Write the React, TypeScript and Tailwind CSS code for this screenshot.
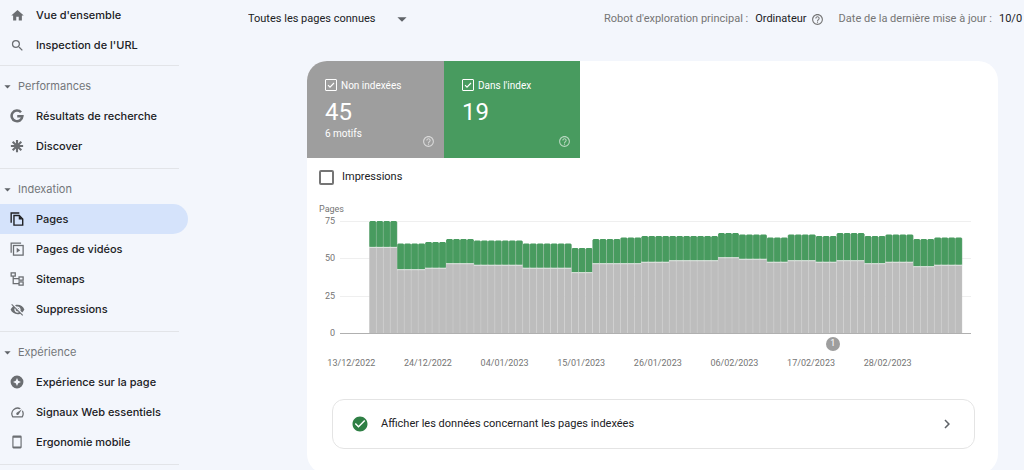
import { useState } from "react";
import type { ReactNode } from "react";
import {
  MdArrowDropDown,
  MdCheckCircle,
  MdChevronRight,
  MdHelpOutline,
  MdHome,
  MdOutlineSpeed,
  MdSearch,
  MdVisibilityOff,
} from "react-icons/md";

function GoogleIcon() {
  return (
    <svg viewBox="0 0 24 24" className="size-[14px]" fill="none" stroke="currentColor" strokeWidth="4.4">
      <path d="M18.9 5.6A9.2 9.2 0 1 0 21.2 12.4H12.4" />
    </svg>
  );
}

function DiscoverIcon() {
  return (
    <svg viewBox="0 0 24 24" className="size-[14px]" fill="none" stroke="currentColor" strokeWidth="3.6">
      <path d="M12 1.5v21M1.5 12h21M4.6 4.6l14.8 14.8M19.4 4.6L4.6 19.4" />
    </svg>
  );
}

function PagesIcon() {
  return (
    <svg viewBox="0 0 24 24" className="size-[14px]" fill="none" stroke="currentColor" strokeWidth="2.4">
      <path d="M2 18.500V1.800h14" />
      <path d="M6.800 6h9l6 6v10.500h-15z" />
      <path d="M15 6v7h7z" fill="currentColor" stroke="none" />
    </svg>
  );
}

function VideoPagesIcon() {
  return (
    <svg viewBox="0 0 24 24" className="size-[14px]" fill="none" stroke="currentColor" strokeWidth="2.2">
      <path d="M2 18.5V2h17" />
      <rect x="6" y="6" width="16.5" height="16.5" />
      <path d="M11.5 10v8.5l6-4.25z" fill="currentColor" stroke="none" />
    </svg>
  );
}

function SitemapIcon() {
  return (
    <svg viewBox="0 0 24 24" className="size-[14px]" fill="none" stroke="currentColor" strokeWidth="2.2">
      <rect x="2" y="1.5" width="7" height="5.5" />
      <rect x="15.5" y="8.5" width="7" height="5.5" />
      <rect x="15.5" y="17" width="7" height="5.5" />
      <path d="M5.5 7v12.8h10M5.5 11.3h10" />
    </svg>
  );
}

function ExperienceIcon() {
  return (
    <svg viewBox="0 0 24 24" className="size-[14px]" fill="currentColor">
      <path
        fillRule="evenodd"
        d="M12 1a11 11 0 1 0 0 22 11 11 0 0 0 0-22zm0 4.2l2.1 4.7 4.7 2.1-4.7 2.1-2.1 4.7-2.1-4.7L5.2 12l4.7-2.1z"
      />
    </svg>
  );
}

function PhoneIcon() {
  return (
    <svg viewBox="0 0 24 24" className="size-[14px]" fill="currentColor">
      <path
        fillRule="evenodd"
        d="M6 1h12a2 2 0 0 1 2 2v18a2 2 0 0 1-2 2H6a2 2 0 0 1-2-2V3a2 2 0 0 1 2-2zm0 3.5v15h12v-15z"
      />
    </svg>
  );
}

type Item = { label: string; icon: ReactNode; active?: boolean };
type Section = { title?: string; items: Item[] };

const sections: Section[] = [
  {
    items: [
      { label: "Vue d'ensemble", icon: <MdHome className="size-[15px]" /> },
      { label: "Inspection de l'URL", icon: <MdSearch className="size-[15px]" /> },
    ],
  },
  {
    title: "Performances",
    items: [
      { label: "Résultats de recherche", icon: <GoogleIcon /> },
      { label: "Discover", icon: <DiscoverIcon /> },
    ],
  },
  {
    title: "Indexation",
    items: [
      { label: "Pages", icon: <PagesIcon />, active: true },
      { label: "Pages de vidéos", icon: <VideoPagesIcon /> },
      { label: "Sitemaps", icon: <SitemapIcon /> },
      { label: "Suppressions", icon: <MdVisibilityOff className="size-[15px]" /> },
    ],
  },
  {
    title: "Expérience",
    items: [
      { label: "Expérience sur la page", icon: <ExperienceIcon /> },
      { label: "Signaux Web essentiels", icon: <MdOutlineSpeed className="size-[15px]" /> },
      { label: "Ergonomie mobile", icon: <PhoneIcon /> },
    ],
  },
];

function NavItem({ label, icon, active }: Item) {
  return (
    <a
      href="#"
      aria-current={active ? "page" : undefined}
      className={
        active
          ? "flex h-[30px] items-center rounded-r-full bg-[#d5e3fb] pl-[9px] text-[#202124]"
          : "flex h-[30px] items-center pl-[9px] text-[#202124]"
      }
    >
      <span className={active ? "flex w-4 justify-center" : "flex w-4 justify-center text-[#6b6e72]"}>{icon}</span>
      <span className="pl-[11px] whitespace-nowrap">{label}</span>
    </a>
  );
}

function Sidebar() {
  return (
    <nav className="w-[188px] shrink-0 font-['Inter','Roboto',sans-serif] text-[11px] font-medium">
      {sections.map((section, i) => (
        <div key={i}>
          <div className={section.title ? "pt-[5px] pb-[7px]" : "pb-[5px]"}>
            {section.title && (
              <button type="button" className="flex h-[30px] items-center font-normal text-[#73767a]">
                <MdArrowDropDown className="size-[15px] text-[#5f6368]" />
                <span className="pl-[3px]">{section.title}</span>
              </button>
            )}
            {section.items.map((item) => (
              <NavItem key={item.label} {...item} />
            ))}
          </div>
          <hr className="mr-[9px] border-[#e2e4e8]" />
        </div>
      ))}
    </nav>
  );
}

function MetricCard(props: { label: string; value: number; note?: string; tone: "gray" | "green" }) {
  const [checked, setChecked] = useState(true);
  return (
    <div
      className={
        props.tone === "gray"
          ? "flex h-[97px] w-[137px] flex-col bg-[#9e9e9e] pt-[17px] pr-[9px] pl-[18px] text-white"
          : "flex h-[97px] w-[136px] flex-col bg-[#489b5f] pt-[17px] pr-[9px] pl-[18px] text-white"
      }
    >
      <label className="flex h-[14px] items-center gap-1 text-[10px] whitespace-nowrap">
        <span className="grid size-3 shrink-0">
          <input
            type="checkbox"
            checked={checked}
            onChange={() => setChecked(!checked)}
            className="col-start-1 row-start-1 size-3 appearance-none rounded-[1px] border border-white"
          />
          {checked && (
            <svg
              viewBox="0 0 12 12"
              className="pointer-events-none col-start-1 row-start-1 size-3"
              fill="none"
              stroke="white"
              strokeWidth="1.1"
            >
              <path d="M3 6.2l2 2 4-4.2" />
            </svg>
          )}
        </span>
        {props.label}
      </label>
      <div className="pt-[6px] text-[24px] leading-[28px]">{props.value}</div>
      <div className="flex items-start justify-between">
        <span className="pt-px text-[10px] leading-[14px]">{props.note}</span>
        <button type="button" aria-label="Aide" className="pt-[9px] opacity-60">
          <MdHelpOutline className="size-[13px]" />
        </button>
      </div>
    </div>
  );
}

// Runs of consecutive days: [days, total pages, pages not indexed]
const runs: [number, number, number][] = [
  [4, 75, 57],
  [4, 60, 42],
  [3, 61, 43],
  [4, 63, 46],
  [7, 62, 45],
  [7, 60, 43],
  [3, 57, 40],
  [4, 63, 46],
  [3, 64, 46],
  [4, 65, 47],
  [7, 65, 48],
  [3, 67, 50],
  [4, 66, 49],
  [3, 64, 47],
  [4, 66, 48],
  [3, 65, 47],
  [4, 67, 48],
  [3, 65, 46],
  [4, 66, 47],
  [3, 63, 44],
  [4, 64, 45],
];
const days = runs.flatMap(([n, total, off]) => Array.from({ length: n }, () => ({ total, off })));
const dates = [
  "13/12/2022",
  "24/12/2022",
  "04/01/2023",
  "15/01/2023",
  "26/01/2023",
  "06/02/2023",
  "17/02/2023",
  "28/02/2023",
];
const START = 29.3;
const PITCH = 6.975;
const UNIT = 112 / 75;

function Chart() {
  return (
    <div className="pr-[27px] pl-3 text-[9px] text-[#757575]">
      <div className="h-3 leading-3">Pages</div>
      <div className="flex">
        <div className="flex h-[124px] w-4 flex-col justify-between text-right leading-[12px]">
          <span>75</span>
          <span>50</span>
          <span>25</span>
          <span>0</span>
        </div>
        <div className="relative ml-[5px] flex-1 pt-[1px]">
          <svg viewBox="0 0 631 113" preserveAspectRatio="none" className="block h-[118px] w-full pt-[5px]">
            {[0, 37, 75].map((y) => (
              <rect key={y} x="0" y={y} width="631" height="1" fill="#efefef" />
            ))}
            {days.map((d, i) => {
              const x = START + i * PITCH;
              const top = 112 - d.total * UNIT;
              const mid = 112 - d.off * UNIT;
              return (
                <g key={i}>
                  <rect x={x} y={top + 1} width={PITCH} height={111 - top} fill="#cbcbcb" />
                  <rect x={x} y={top + 1} width={PITCH} height={mid - top - 2} fill="#6fb081" />
                  <rect x={x + 0.4} y={top} width={PITCH - 0.8} height={mid - top - 1} rx="1" fill="#489b5f" />
                  <rect x={x} y={mid - 1} width={PITCH} height="1" fill="#e4ebe6" />
                  <rect x={x + 0.35} y={mid} width={PITCH - 0.7} height={112 - mid} fill="#bdbdbd" />
                </g>
              );
            })}
            <rect x="0" y="112" width="631" height="1" fill="#b0b0b0" />
          </svg>
          <span className="absolute top-[122px] left-[77%] flex size-[14px] items-center justify-center rounded-full bg-[#9e9e9e] text-[9px] text-white">
            1
          </span>
        </div>
      </div>
      <div className="mr-[45px] -ml-[6px] grid grid-cols-8 pt-[18px] text-center leading-[12px]">
        {dates.map((d) => (
          <span key={d}>{d}</span>
        ))}
      </div>
    </div>
  );
}

export default function App() {
  return (
    <div className="flex h-screen overflow-hidden bg-[#f3f6fc] font-['Roboto',sans-serif] text-[#3c4043]">
      <Sidebar />
      <main className="min-w-0 flex-1">
        <header className="flex h-[61px] items-start pt-[10px] pl-[60px] text-[11px] leading-[18px] whitespace-nowrap">
          <div className="grid h-[18px] w-[356px] shrink-0 grid-cols-[165px] grid-rows-[18px] items-center">
            <select
              aria-label="Pages affichées"
              className="col-start-1 row-start-1 w-full appearance-none bg-transparent text-[11px] text-[#202124]"
            >
              <option>Toutes les pages connues</option>
            </select>
            <MdArrowDropDown className="pointer-events-none col-start-1 row-start-1 size-[22px] justify-self-end text-[#5f6368]" />
          </div>
          <div className="flex min-w-0 flex-1 items-center overflow-hidden text-[#757575]">
            <span className="flex gap-[7px]">
              <span>Robot d'exploration principal :</span>
              <span className="text-[#202124]">Ordinateur</span>
            </span>
            <button type="button" aria-label="Aide" className="mr-[15px] ml-1">
              <MdHelpOutline className="size-[13px]" />
            </button>
            <span className="flex gap-[7px]">
              <span>Date de la dernière mise à jour :</span>
              <span className="text-[#202124]">10/0</span>
            </span>
          </div>
        </header>
        <section className="mr-[26px] ml-[119px] overflow-hidden rounded-[20px] bg-white pb-[25px]">
          <div className="flex">
            <MetricCard label="Non indexées" value={45} note="6 motifs" tone="gray" />
            <MetricCard label="Dans l'index" value={19} tone="green" />
          </div>
          <label className="flex h-[39px] w-fit items-center gap-2 pl-3 text-[11px] text-[#202124]">
            <input type="checkbox" className="size-[15px] appearance-none rounded-[2px] border-2 border-[#757575]" />
            Impressions
          </label>
          <div className="pt-[6px]">
            <Chart />
          </div>
          <a
            href="#"
            className="mt-[30px] mr-[23px] ml-[25px] flex h-[50px] items-center rounded-xl border border-[#e4e4e4] px-[18px] text-[11px] text-[#202124]"
          >
            <MdCheckCircle className="size-[18px] text-[#2f7f45]" />
            <span className="flex-1 pl-3">Afficher les données concernant les pages indexées</span>
            <MdChevronRight className="size-[18px] text-[#5f6368]" />
          </a>
        </section>
      </main>
    </div>
  );
}
